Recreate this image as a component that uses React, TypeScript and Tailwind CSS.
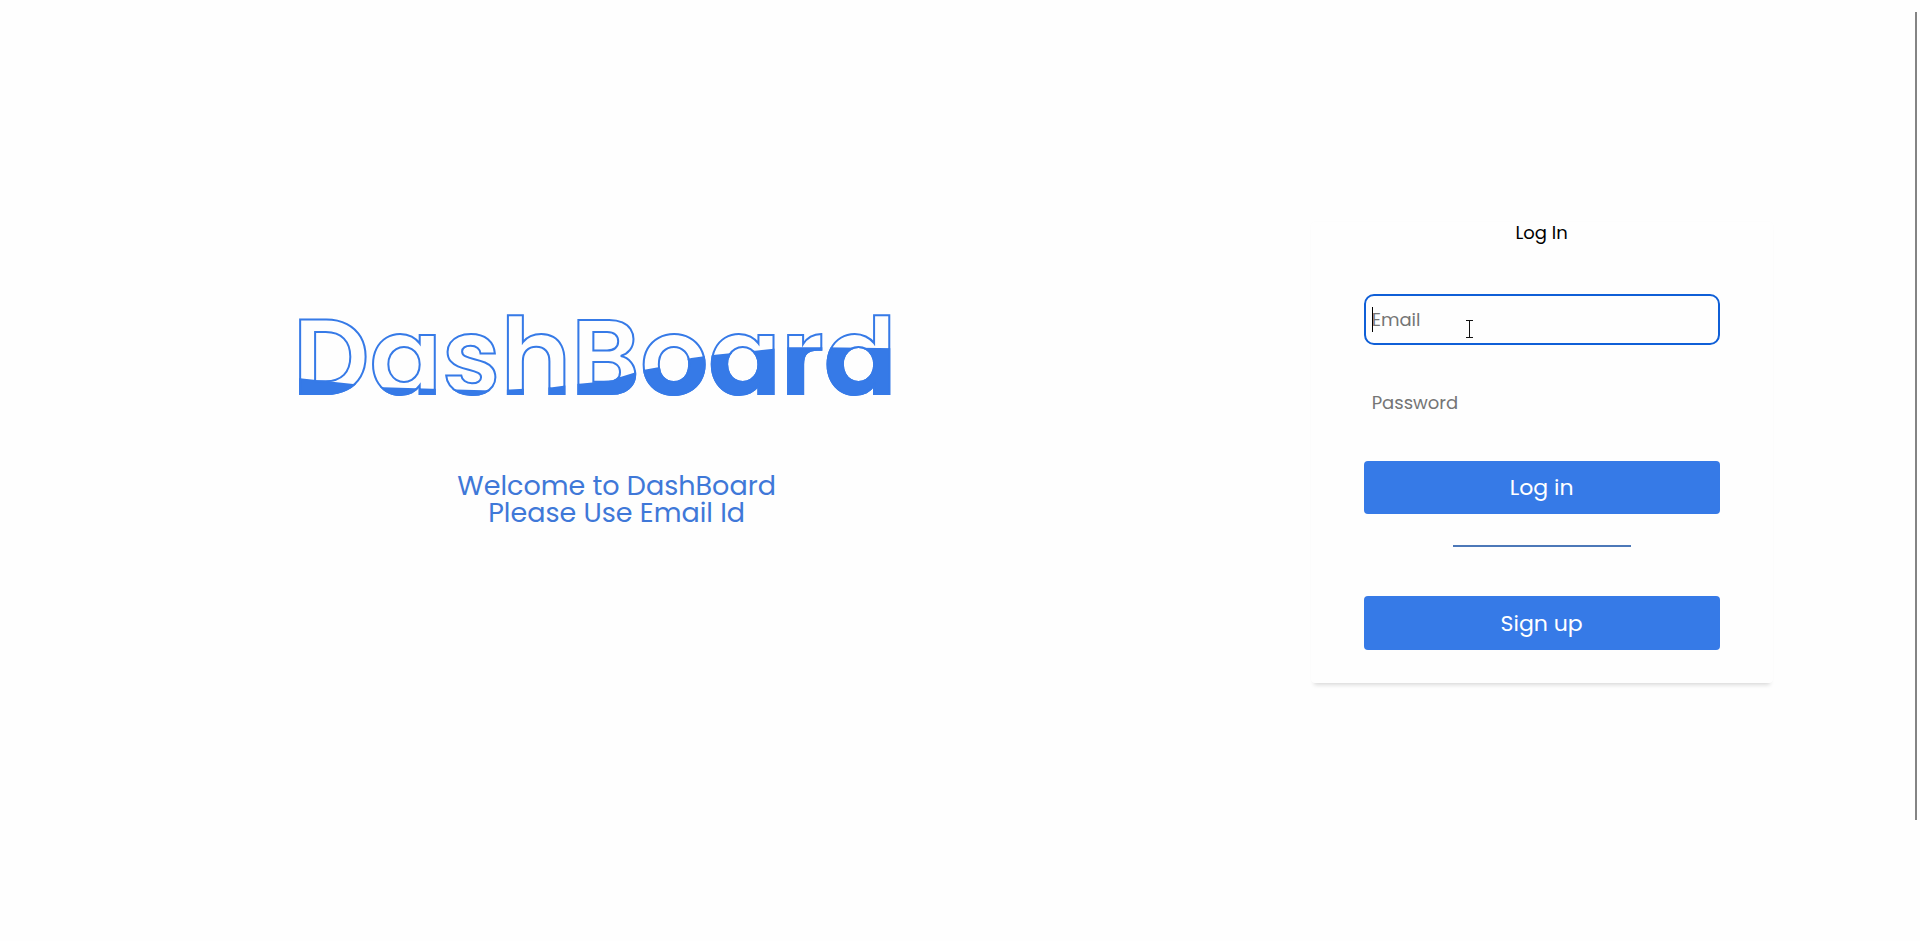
const WAVE =
  "after:[clip-path:polygon(0%_69%,10%_75%,15%_78%,27%_80%,33%_81%,36%_80%,43%_78%,47%_75%,51%_73%,54%_69%,58%_62%,61%_59%,66%_51%,70%_48%,77%_44%,82%_41%,88%_41%,100%_42%,100%_100%,0%_100%)]";

function Banner() {
  return (
    <h1
      className={`relative mr-11 text-[107px] leading-[108px] font-semibold text-transparent [-webkit-text-stroke:2px_#367ae7] after:absolute after:inset-0 after:text-[#367ae7] after:content-['DashBoard'] ${WAVE}`}
    >
      DashBoard
    </h1>
  );
}

function TextCursor() {
  return (
    <svg
      className="pointer-events-none absolute top-[26px] left-[102px]"
      width="7"
      height="18"
      viewBox="0 0 7 18"
      fill="none"
      stroke="#111"
      aria-hidden="true"
    >
      <path d="M0 .5H7M3.5 0V18M0 17.5H7" />
    </svg>
  );
}

const button = "w-full rounded bg-[#367ae7] text-[22px] text-white";

function LoginCard() {
  return (
    <form className="flex w-[462px] flex-col items-center rounded px-[53px] pb-[33px] shadow-[0_5px_4px_-3px_rgba(0,0,0,0.14),0_0_2px_rgba(0,0,0,0.02)]">
      <h2 className="text-[18px] leading-[22px] text-black">Log In</h2>
      <div className="relative mt-[50px] w-full">
        <input
          type="email"
          aria-label="Email"
          placeholder="Email"
          className="block h-[51px] w-full rounded-[10px] border-2 border-[#0f5fd7] px-1.5 text-[18px] text-black caret-transparent outline-none placeholder:text-[#757575]"
        />
        <span className="pointer-events-none absolute top-[13px] left-2 h-[25px] w-px bg-black" />
        <TextCursor />
      </div>
      <input
        type="password"
        aria-label="Password"
        placeholder="Password"
        className="mt-8 block h-[51px] w-full px-2 text-[18px] text-black outline-none placeholder:text-[#757575]"
      />
      <button type="submit" className={`${button} mt-[33px] h-[53px]`}>
        Log in
      </button>
      <hr className="mt-[31px] w-1/2 border-t-2 border-[#4c78b8]" />
      <button type="button" className={`${button} mt-[49px] h-[54px]`}>
        Sign up
      </button>
    </form>
  );
}

export default function App() {
  return (
    <div className="relative min-h-screen bg-[#fefefe] font-['Poppins','Inter',sans-serif]">
      <main className="grid grid-cols-[2fr_1fr] pr-[70px]">
        <section className="flex flex-col items-center pt-[303px]">
          <Banner />
          <p className="mt-[61px] text-center text-[27px] leading-[27px] text-[#3f78d8]">
            Welcome to DashBoard
            <br />
            Please Use Email Id
          </p>
        </section>
        <section className="flex flex-col items-center pt-[222px]">
          <LoginCard />
        </section>
      </main>
      <div className="absolute top-3 right-[3px] h-[808px] w-0.5 bg-[#848484]" />
    </div>
  );
}
